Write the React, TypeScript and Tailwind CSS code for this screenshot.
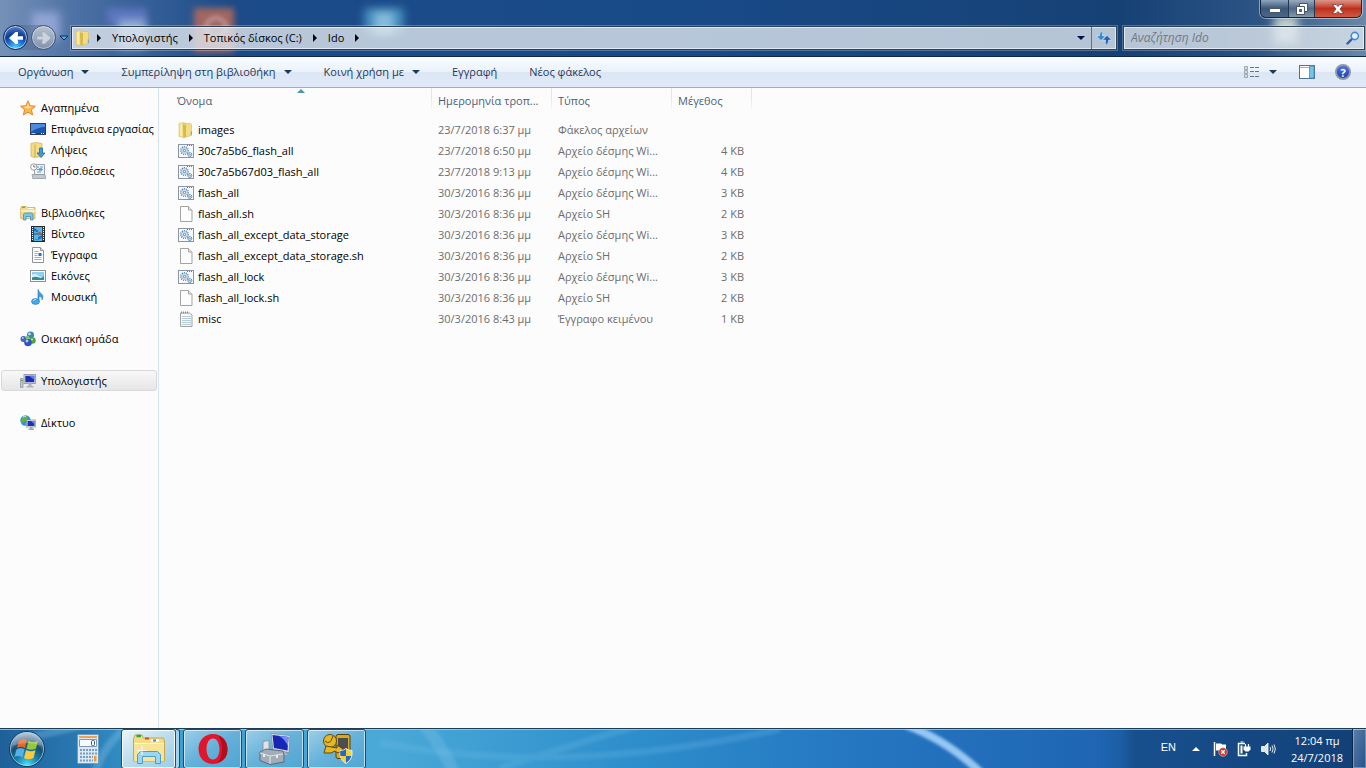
import React from 'react';

type IconProps = { className?: string };

const FolderIcon = () => (
  <svg viewBox="0 0 16 16" className="w-4 h-4 shrink-0" aria-hidden="true">
    <path d="M1 1.5L5.5 .5 8 1.5v13l-3 1-4-1z" fill="#f3e08a" stroke="#d9bd58" strokeWidth=".6" />
    <path d="M5 2l3-.5h4.5l1 1v11L6 15.5l-1-1z" fill="#f3dd82" stroke="#d6ba58" strokeWidth=".6" />
    <path d="M5 2.5L8 3v11.8l-2.5.7z" fill="#d6b84c" />
    <path d="M2.2 2l2.200-.4v13L2.200 14z" fill="#f9edac" />
    <path d="M12.8 9.5h.9V13h-.9z" fill="#4aa3e0" />
  </svg>
);

const BatchIcon = () => (
  <svg viewBox="0 0 16 16" className="w-4 h-4 shrink-0" aria-hidden="true">
    <rect x=".5" y="1.5" width="15" height="13" fill="#f6f8fb" stroke="#8b95a5" />
    <path d="M9 2.5h6" stroke="#5e7fa5" strokeDasharray="1 1" />
    <circle cx="6.5" cy="7.5" r="3.8" fill="none" stroke="#3f6f9f" strokeWidth="1.2" strokeDasharray="1 1.100" />
    <circle cx="6.5" cy="7.5" r="2.9" fill="#e6f1fa" stroke="#7fa8cc" strokeWidth=".7" />
    <circle cx="6.5" cy="7.5" r="1.2" fill="#fff" stroke="#3b6795" strokeWidth=".8" />
    <circle cx="11.8" cy="11.5" r="2" fill="#e5f0fa" stroke="#35679c" strokeWidth="1" strokeDasharray="1.1 .5" />
    <circle cx="11.8" cy="11.5" r=".7" fill="#fff" stroke="#35679c" strokeWidth=".5" />
  </svg>
);

const FileIcon = () => (
  <svg viewBox="0 0 16 16" className="w-4 h-4 shrink-0" aria-hidden="true">
    <path d="M2.5 .5h8L14 4v11.5H2.5z" fill="#fdfdfd" stroke="#a3a3a3" />
    <path d="M10.5 .5V4H14" fill="#ececec" stroke="#a3a3a3" />
  </svg>
);

const TextIcon = () => (
  <svg viewBox="0 0 16 16" className="w-4 h-4 shrink-0" aria-hidden="true">
    <path d="M2.5 2h9L14 4v11.5H2.5z" fill="#f7f9fa" stroke="#a3a3a3" />
    <path d="M3 1.5h8" stroke="#8d8d8d" strokeWidth="2" strokeDasharray="1 1" />
    <path d="M4 5.5h9M4 7.5h9M4 9.5h9M4 11.5h9M4 13.5h9" stroke="#b9cdd8" />
  </svg>
);

const StarIcon = () => (
  <svg viewBox="0 0 16 16" className="w-4 h-4 shrink-0" aria-hidden="true">
    <path d="M8 .8l2.1 4.9 5.3.5-4 3.5 1.2 5.2L8 12.2l-4.6 2.7 1.2-5.2-4-3.5 5.3-.5z" fill="#fcb64a" stroke="#e8842a" strokeLinejoin="round" />
    <path d="M8 3l1.3 3.5 3.5.5-5 1.5-4.3-1.6 3.2-.4z" fill="#fee3a4" />
  </svg>
);

const DesktopIcon = () => (
  <svg viewBox="0 0 16 16" className="w-4 h-4 shrink-0" aria-hidden="true">
    <rect x=".5" y="2.5" width="15" height="11" fill="#1d55b0" stroke="#2c3e5c" />
    <path d="M1 3h14v3Q8 6 1 11z" fill="#4b8be0" />
    <path d="M1 12.5h14" stroke="#27406b" />
    <path d="M1.5 12.5h4" stroke="#9fd0ee" />
    <path d="M11 12.5h3" stroke="#fff" strokeDasharray="1 1" />
  </svg>
);

const DownloadsIcon = () => (
  <svg viewBox="0 0 16 16" className="w-4 h-4 shrink-0" aria-hidden="true">
    <path d="M1 1.5l5-1 6 1v13l-7 1-4-1z" fill="#f2dd85" stroke="#cfae4c" strokeWidth=".7" />
    <path d="M5 2.5V15" stroke="#cda941" />
    <path d="M9.5 6h3v5H15l-4 4.5L7 11h2.5z" fill="#3f9be0" stroke="#1d67ae" strokeWidth=".8" />
  </svg>
);

const RecentIcon = () => (
  <svg viewBox="0 0 16 16" className="w-4 h-4 shrink-0" aria-hidden="true">
    <path d="M4.5 1.5h10v10h-10z" fill="#f1f3f6" stroke="#9aa1aa" />
    <path d="M7 4h2M10 4h3M7 6.5h6M7 9h4" stroke="#6b9ccc" />
    <path d="M9 5h3v3H9z" fill="#59b0e4" />
    <circle cx="3.8" cy="4" r="3.2" fill="#fff" stroke="#8b8f96" strokeWidth=".9" />
    <path d="M3.8 2v2h1.7" fill="none" stroke="#555" strokeWidth=".8" />
    <path d="M2 11.5h13l.8 4h-13z" fill="#c5c9cf" stroke="#8b9098" strokeWidth=".7" />
  </svg>
);

const LibrariesIcon = () => (
  <svg viewBox="0 0 16 16" className="w-4 h-4 shrink-0" aria-hidden="true">
    <path d="M.7 3.5l.8-2h5l1 1H15v11H.7z" fill="#f1dc88" stroke="#cfae56" strokeWidth=".8" />
    <path d="M2 2.3h3" stroke="#4ca64c" />
    <path d="M8 3.5h5" stroke="#fff" />
    <path d="M1 5h14v2H1z" fill="#fbf0b8" />
    <path d="M3.5 15V9L5 8h6.500L13 9v6h-2.5v-3.5H6V15z" fill="#7cc5ec" stroke="#3d8fc4" strokeWidth=".8" />
  </svg>
);

const VideoIcon = () => (
  <svg viewBox="0 0 16 16" className="w-4 h-4 shrink-0" aria-hidden="true">
    <rect x="1.5" y=".5" width="13" height="15" fill="#39434e" stroke="#222930" />
    <path d="M4 1h8v6.500H4zM4 8.500h8V15H4z" fill="#55b6ec" />
    <path d="M4 1.500l4 3v2L4 5zM12 9l-4 2v3l4-2z" fill="#1f75ba" />
    <path d="M8 6l3 1M5 13l3 1" stroke="#c4553b" />
    <path d="M2.500 1v14M13.500 1v14" stroke="#f1f1f1" strokeDasharray="1 1" />
  </svg>
);

const DocumentIcon = () => (
  <svg viewBox="0 0 16 16" className="w-4 h-4 shrink-0" aria-hidden="true">
    <path d="M2.5 .5h8l3 3v12h-11z" fill="#fdfdfd" stroke="#8f959c" />
    <path d="M10.5 .5v3h3" fill="#e4e7ea" stroke="#8f959c" />
    <path d="M4.5 4.5h4M4.5 6.5h3M4.5 8.5h3M4.5 10.5h7M4.5 12.5h7" stroke="#9fb0c2" />
    <path d="M8.500 6h3v3h-3z" fill="#2f6fb4" />
  </svg>
);

const PicturesIcon = () => (
  <svg viewBox="0 0 16 16" className="w-4 h-4 shrink-0" aria-hidden="true">
    <rect x=".5" y="2.5" width="15" height="11" fill="#fff" stroke="#8b9096" />
    <path d="M2 4h12v8H2z" fill="#8dd0f3" />
    <path d="M2 7q3-2 6 .5t6 .5v4H2z" fill="#d9f1fb" />
    <path d="M2 9.5q4-1.500 7 0t5-2V12H2z" fill="#2f8e94" />
  </svg>
);

const MusicIcon = () => (
  <svg viewBox="0 0 16 16" className="w-4 h-4 shrink-0" aria-hidden="true">
    <path d="M8 .5q1 3 3.500 4.500T12 11q1-3-3-4v5.500H8z" fill="#3b9fe0" stroke="#2377b8" strokeWidth=".6" />
    <ellipse cx="5.5" cy="12.5" rx="4" ry="2.9" fill="#44a9ea" stroke="#2377b8" strokeWidth=".6" />
    <path d="M3 12q1-1.800 3-1.600" stroke="#b6e2fa" fill="none" />
  </svg>
);

const HomegroupIcon = () => (
  <svg viewBox="0 0 16 16" className="w-4 h-4 shrink-0" aria-hidden="true">
    <circle cx="10.5" cy="4" r="3.6" fill="#3f86b8" />
    <circle cx="3.5" cy="8" r="3" fill="#3d68bd" />
    <circle cx="12.5" cy="9.5" r="3.2" fill="#4ba348" />
    <circle cx="8" cy="11.5" r="3.8" fill="#3552c0" />
    <circle cx="7.5" cy="6.5" r="1.8" fill="#79c36e" />
    <circle cx="9.5" cy="3" r="1.3" fill="#c3e3f4" />
    <circle cx="7" cy="10" r="1.4" fill="#b6c8f7" />
    <circle cx="12" cy="8.5" r="1" fill="#c5ecb6" />
    <circle cx="2.8" cy="7" r=".9" fill="#bdd1f5" />
  </svg>
);

const ComputerIcon = () => (
  <svg viewBox="0 0 16 16" className="w-4 h-4 shrink-0" aria-hidden="true">
    <path d="M.5 5.500H3v9H.5z" fill="#c3c8ce" stroke="#8a9098" strokeWidth=".7" />
    <path d="M1 7.500h1.500" stroke="#3faa3f" />
    <rect x="4" y="1.500" width="11.500" height="9" fill="#d7dade" stroke="#8d929a" strokeWidth=".8" />
    <path d="M5.300 2.800h9v6.400h-9z" fill="#1c2fb4" />
    <path d="M9 2.800h5.300v4z" fill="#5e7ff0" />
    <path d="M8.500 10.500h3V13h2v1.500h-7V13h2z" fill="#aeb3ba" />
  </svg>
);

const NetworkIcon = () => (
  <svg viewBox="0 0 16 16" className="w-4 h-4 shrink-0" aria-hidden="true">
    <circle cx="5.5" cy="5.5" r="5.2" fill="#3a8fd2" />
    <path d="M2 3q3-3 5-1.500T5 6 1 7zM6 7q3 0 2 3l-3-.5z" fill="#58b64a" />
    <path d="M3 2q2-1.200 3-.6" stroke="#d8f2fa" fill="none" />
    <rect x="6.5" y="5" width="9" height="7" fill="#dfe3e8" stroke="#8d929a" strokeWidth=".7" />
    <path d="M7.500 6h7v5h-7z" fill="#1a36b8" />
    <path d="M11 6h3.500v3z" fill="#6a8bf4" />
    <path d="M10 12h2.500v1.500H14V15H8.500v-1.500H10z" fill="#a4aab2" />
  </svg>
);

const Caret = ({ className = 'fill-[#1e395b]' }: IconProps) => (
  <svg viewBox="0 0 8 4" className={`h-1 w-2 shrink-0 ${className}`} aria-hidden="true">
    <path d="M0 0h8L4 4z" />
  </svg>
);

const CrumbArrow = () => (
  <svg viewBox="0 0 4 8" className="h-2 w-1 shrink-0" aria-hidden="true">
    <path d="M0 0l4 4-4 4z" fill="#000" />
  </svg>
);

const sidebarGroups = [
  {
    label: 'Αγαπημένα',
    icon: StarIcon,
    children: [
      { label: 'Επιφάνεια εργασίας', icon: DesktopIcon },
      { label: 'Λήψεις', icon: DownloadsIcon },
      { label: 'Πρόσ.θέσεις', icon: RecentIcon },
    ],
  },
  {
    label: 'Βιβλιοθήκες',
    icon: LibrariesIcon,
    children: [
      { label: 'Βίντεο', icon: VideoIcon },
      { label: 'Έγγραφα', icon: DocumentIcon },
      { label: 'Εικόνες', icon: PicturesIcon },
      { label: 'Μουσική', icon: MusicIcon },
    ],
  },
  { label: 'Οικιακή ομάδα', icon: HomegroupIcon, children: [] },
  { label: 'Υπολογιστής', icon: ComputerIcon, children: [], selected: true },
  { label: 'Δίκτυο', icon: NetworkIcon, children: [] },
];

const BATCH = 'Αρχείο δέσμης Wi...';

const files = [
  { name: 'images', date: '23/7/2018 6:37 μμ', type: 'Φάκελος αρχείων', size: '', icon: FolderIcon },
  { name: '30c7a5b6_flash_all', date: '23/7/2018 6:50 μμ', type: BATCH, size: '4 KB', icon: BatchIcon },
  { name: '30c7a5b67d03_flash_all', date: '23/7/2018 9:13 μμ', type: BATCH, size: '4 KB', icon: BatchIcon },
  { name: 'flash_all', date: '30/3/2016 8:36 μμ', type: BATCH, size: '3 KB', icon: BatchIcon },
  { name: 'flash_all.sh', date: '30/3/2016 8:36 μμ', type: 'Αρχείο SH', size: '2 KB', icon: FileIcon },
  { name: 'flash_all_except_data_storage', date: '30/3/2016 8:36 μμ', type: BATCH, size: '3 KB', icon: BatchIcon },
  { name: 'flash_all_except_data_storage.sh', date: '30/3/2016 8:36 μμ', type: 'Αρχείο SH', size: '2 KB', icon: FileIcon },
  { name: 'flash_all_lock', date: '30/3/2016 8:36 μμ', type: BATCH, size: '3 KB', icon: BatchIcon },
  { name: 'flash_all_lock.sh', date: '30/3/2016 8:36 μμ', type: 'Αρχείο SH', size: '2 KB', icon: FileIcon },
  { name: 'misc', date: '30/3/2016 8:43 μμ', type: 'Έγγραφο κειμένου', size: '1 KB', icon: TextIcon },
];

const commands = [
  { label: 'Οργάνωση', menu: true },
  { label: 'Συμπερίληψη στη βιβλιοθήκη', menu: true },
  { label: 'Κοινή χρήση με', menu: true },
  { label: 'Εγγραφή', menu: false },
  { label: 'Νέος φάκελος', menu: false },
];

function WindowButtons() {
  return (
    <div className="absolute right-1 top-0 flex h-[18px] overflow-hidden rounded-b-md border border-t-0 border-[#16273d] shadow-[0_0_0_1px_rgba(255,255,255,0.45)]">
      <button aria-label="Ελαχιστοποίηση" className="flex w-7 items-end justify-center border-r border-[#24374f] bg-linear-to-b from-[#8fa4bf] via-[#3c5878] to-[#47678c] pb-1">
        <svg viewBox="0 0 12 5" className="h-[5px] w-3">
          <rect x=".5" y=".5" width="11" height="4" rx=".5" fill="#fff" stroke="#4b5563" />
        </svg>
      </button>
      <button aria-label="Επαναφορά" className="flex w-[26px] items-center justify-center border-r border-[#24374f] bg-linear-to-b from-[#9aabc0] via-[#4e6a88] to-[#8599ab]">
        <svg viewBox="0 0 12 12" className="h-3 w-3">
          <path d="M3.5 .5h8v8h-8z" fill="#fff" stroke="#4b5563" />
          <path d="M.5 3.5h8v8h-8z" fill="#fff" stroke="#4b5563" />
          <path d="M3.5 6.5h2v2h-2z" fill="#64798f" stroke="#4b5563" />
        </svg>
      </button>
      <button aria-label="Κλείσιμο" className="flex w-[46px] items-center justify-center bg-linear-to-b from-[#dd9588] via-[#bd2f1c] to-[#cf5a41]">
        <svg viewBox="0 0 12 10" className="h-2.5 w-3">
          <path d="M.5 .5H4l2 2 2-2h3.500L8 5l3.500 4.500H8l-2-2-2 2H.5L4 5z" fill="#fff" stroke="#5a3434" strokeWidth=".7" />
        </svg>
      </button>
    </div>
  );
}

function TitleBar() {
  return (
    <header className="relative flex h-14 shrink-0 items-end overflow-hidden bg-[linear-gradient(90deg,#7591b8_0%,#4a6fa3_6%,#1c4b88_17%,#194a88_50%,#164175_82%,#2c5484_92%,#6a88a8_100%)]">
      {/* desktop shortcuts showing through the glass */}
      <div aria-hidden="true" className="absolute inset-0">
        <div className="absolute left-8 top-3 h-7 w-7 bg-[#b5c0ee]/60 blur-[5px]" />
        <div className="absolute left-[107px] top-2 h-4 w-10 bg-[#6f7ed4]/60 blur-[3px]" />
        <div className="absolute left-[118px] top-5 h-7 w-7 bg-[#bcd3f0]/70 blur-[4px]" />
        <div className="absolute left-[194px] top-2 h-11 w-10 bg-[#b0695c]/90 blur-[3px]" />
        <div className="absolute left-[204px] top-4 h-6 w-6 rounded-full border-4 border-[#c9a7a8]/70 blur-[2px]" />
        <div className="absolute left-[364px] top-2 h-6 w-10 bg-[#4d9cc8]/80 blur-[4px]" />
        <div className="absolute left-[374px] top-3 h-6 w-5 bg-[#b0dcf0]/60 blur-[4px]" />
        <div className="absolute right-[68px] top-4 h-7 w-6 bg-[#e6ecd9]/80 blur-[5px]" />
      </div>
      <WindowButtons />

      <div className="relative mb-[6px] flex w-full items-center pl-[3px]">
        <div className="flex items-center gap-[3px] rounded-full bg-[#4a6487]/40">
          <button aria-label="Πίσω" className="flex h-[25px] w-[25px] items-center justify-center rounded-full border border-[#142c55] bg-[radial-gradient(circle_at_50%_95%,#4fd3ff_0%,#1f7be0_30%,#0d3a97_55%,#7ba3df_100%)] shadow-[inset_0_0_0_1px_rgba(255,255,255,0.6)]">
            <svg viewBox="0 0 16 14" className="h-3.5 w-4">
              <path d="M7.5 1L1 7l6.5 6H10V9.5L9 8.700h6V5.300H9l1-.8V1z" fill="#fff" />
            </svg>
          </button>
          <button aria-label="Εμπρός" className="flex h-[25px] w-[25px] items-center justify-center rounded-full border border-[#41597c] bg-linear-to-b from-[#b9c3d3] to-[#8191aa] shadow-[inset_0_0_0_1px_rgba(255,255,255,0.4)]">
            <svg viewBox="0 0 16 14" className="h-3.5 w-4">
              <path d="M8.5 1L15 7l-6.5 6H6V9.5L7 8.700H1V5.300h6L6 4.500V1z" fill="#ccd3de" stroke="#95a2b5" strokeWidth=".5" />
            </svg>
          </button>
        </div>
        <button aria-label="Πρόσφατες σελίδες" className="flex w-[15px] items-center justify-center">
          <Caret className="fill-[#49b4ee] stroke-[#10294d] overflow-visible" />
        </button>

        <div className="flex h-6 min-w-0 flex-1 items-center border border-[#2c4057] bg-[#dfe6ee]/80 pl-[3px] shadow-[inset_0_0_0_1px_rgba(255,255,255,0.6),0_0_0_1px_rgba(255,255,255,0.25)]">
          <FolderIcon />
          <nav className="flex flex-1 items-center gap-[11px] pl-1.5">
            <CrumbArrow />
            <a href="#computer">Υπολογιστής</a>
            <CrumbArrow />
            <a href="#c">Τοπικός δίσκος (C:)</a>
            <CrumbArrow />
            <a href="#ido">Ido</a>
            <CrumbArrow />
          </nav>
          <button aria-label="Προηγούμενες θέσεις" className="flex h-full w-5 items-center justify-center">
            <Caret className="fill-[#000b4a]" />
          </button>
          <button aria-label="Ανανέωση" className="flex h-full w-[25px] items-center justify-center border-l border-[#5f7188]">
            <svg viewBox="0 0 16 14" className="h-3.5 w-4">
              <path d="M7 0Q3.500 .5 3.500 4.500V5H.5l4.500 4.500L9.500 5H6.500Q6 2.500 7 0z" fill="#2f8ad8" stroke="#fff" strokeWidth=".4" />
              <path d="M9 14Q12.500 13.500 12.500 9.500V9h3L11 4.500 6.500 9h3Q10 11.500 9 14z" fill="#2460ac" stroke="#fff" strokeWidth=".4" />
            </svg>
          </button>
        </div>

        <div className="ml-1.5 mr-px flex h-6 w-[242px] items-center border border-[#2c4057] bg-[#dfe6ee]/80 pl-[7px] pr-1 shadow-[inset_0_0_0_1px_rgba(255,255,255,0.6),0_0_0_1px_rgba(255,255,255,0.25)]">
          <input
            type="search"
            aria-label="Αναζήτηση"
            placeholder="Αναζήτηση Ido"
            className="min-w-0 flex-1 bg-transparent text-[12px] italic outline-none placeholder:text-[#74787e]"
          />
          <svg viewBox="0 0 14 14" className="h-3.5 w-3.5" aria-hidden="true">
            <path d="M1.5 12.5L6 8" stroke="#2a5fae" strokeWidth="2.4" strokeLinecap="round" />
            <circle cx="8.8" cy="5" r="3.6" fill="#e6f1fa" stroke="#3f8fd2" strokeWidth="1.6" />
          </svg>
        </div>
      </div>
    </header>
  );
}

function CommandBar() {
  return (
    <div className="flex h-8 shrink-0 items-center justify-between border-b border-t border-b-[#a0afc3] border-t-[#13294a] bg-[linear-gradient(#fafcff_0%,#eaf2fb_48%,#dce6f4_52%,#dfe9f7_100%)] pl-[18px] pr-[15px] text-[#1e395b]">
      <div className="flex items-center gap-8">
        {commands.map((command) => (
          <button key={command.label} className="flex items-center gap-2 whitespace-nowrap">
            {command.label}
            {command.menu && <Caret />}
          </button>
        ))}
      </div>
      <div className="flex items-center">
        <button aria-label="Αλλαγή προβολής">
          <svg viewBox="0 0 16 14" className="h-3.5 w-4">
            <path d="M.5 1.5h3v3h-3zM.5 5.5h3v3h-3zM.5 9.5h3v3h-3z" fill="#fff" stroke="#8995a6" strokeWidth=".8" />
            <path d="M1.5 3h1M1.5 11h1" stroke="#3978c0" />
            <path d="M1.5 7h1" stroke="#cf3b2b" />
            <path d="M6 2.5h4M11 2.5h4M6 6.5h4M11 6.5h4M6 11.5h4M11 11.5h4" stroke="#63748b" />
          </svg>
        </button>
        <button aria-label="Περισσότερες επιλογές" className="ml-[9px] py-2">
          <Caret />
        </button>
        <button aria-label="Παράθυρο προεπισκόπησης" className="ml-[22px]">
          <svg viewBox="0 0 16 14" className="h-3.5 w-4">
            <rect x=".5" y=".5" width="15" height="13" fill="#fff" stroke="#4f7296" />
            <path d="M1 2.5h9" stroke="#9ab2cc" />
            <path d="M10.5 1H15v12h-4.5z" fill="#76c4e8" stroke="#4f88b0" strokeWidth=".8" />
          </svg>
        </button>
        <button aria-label="Βοήθεια" className="ml-5 flex h-4 w-4 items-center justify-center rounded-full border-2 border-[#8e98ac] bg-[radial-gradient(circle_at_50%_20%,#4f78e6,#1b35a0)] leading-none font-bold text-white">
          ?
        </button>
      </div>
    </div>
  );
}

function Sidebar() {
  return (
    <nav className="flex w-[159px] shrink-0 flex-col gap-[21px] border-r border-[#d6e5f5] pt-[9px] pl-px pr-px">
      {sidebarGroups.map(({ label, icon: Icon, children, selected }) => (
        <ul key={label}>
          <li>
            <a
              href="#"
              className={`flex h-[21px] items-center gap-[5px] whitespace-nowrap rounded-[3px] border pl-[18px] ${
                selected ? 'border-[#d9d9d9] bg-linear-to-b from-[#f8f8f8] to-[#e6e6e6]' : 'border-transparent'
              }`}
            >
              <Icon />
              {label}
            </a>
          </li>
          {children.map(({ label: childLabel, icon: ChildIcon }) => (
            <li key={childLabel}>
              <a href="#" className="flex h-[21px] items-center gap-[5px] whitespace-nowrap pl-[29px]">
                <ChildIcon />
                {childLabel}
              </a>
            </li>
          ))}
        </ul>
      ))}
    </nav>
  );
}

const headCell = 'h-[31px] pb-1.5 text-left font-normal bg-[linear-gradient(#dbe7f5_40%,#fcfcfc)] bg-[length:1px_24px] bg-right-top bg-no-repeat';

function FileList() {
  return (
    <main className="relative min-w-0 flex-1 overflow-auto">
      <svg viewBox="0 0 8 4" className="absolute left-[138px] top-px h-1 w-2" aria-hidden="true">
        <path d="M0 4h8L4 0z" fill="#4d93b8" />
      </svg>
      <table className="w-[593px] table-fixed border-collapse">
        <colgroup>
          <col className="w-[273px]" />
          <col className="w-[120px]" />
          <col className="w-[120px]" />
          <col className="w-20" />
        </colgroup>
        <thead>
          <tr className="whitespace-nowrap text-[#4c607a]">
            <th className={`${headCell} pl-[18px]`}>Όνομα</th>
            <th className={`${headCell} pl-1.5`}>Ημερομηνία τροπ...</th>
            <th className={`${headCell} pl-1.5`}>Τύπος</th>
            <th className={`${headCell} pl-1.5`}>Μέγεθος</th>
          </tr>
        </thead>
        <tbody>
          {files.map(({ name, date, type, size, icon: Icon }) => (
            <tr key={name} className="h-[21px] whitespace-nowrap text-[#6d6d6d]">
              <td className="p-0 pl-[19px] text-black">
                <div className="flex items-center gap-1">
                  <Icon />
                  {name}
                </div>
              </td>
              <td className="p-0 pl-1.5">{date}</td>
              <td className="p-0 pl-1.5">{type}</td>
              <td className="p-0 pr-2 text-right">{size}</td>
            </tr>
          ))}
        </tbody>
      </table>
    </main>
  );
}

const taskButton =
  'flex h-10 w-[59px] items-center justify-center rounded-[3px] border border-[#1d4c70] bg-linear-to-br from-[#a6d3ea]/90 via-[#6db4da]/80 to-[#55a5d2]/80 shadow-[inset_0_0_0_1px_rgba(255,255,255,0.6)]';

function Taskbar() {
  return (
    <footer className="relative flex h-10 shrink-0 items-center overflow-hidden border-t border-[#1d3c55] bg-[linear-gradient(90deg,#1f6099_0%,#2a7ab4_6%,#3a9fd2_12%,#4ba9d8_28%,#2f90cc_45%,#2577c2_62%,#1f66b4_80%,#1c5ea6_82%,#17508e_83%,#123f76_100%)] text-white">
      <svg viewBox="0 0 1366 40" preserveAspectRatio="none" className="absolute inset-0 h-full w-full" aria-hidden="true">
        <defs>
          <filter id="soft">
            <feGaussianBlur stdDeviation="1.5" />
          </filter>
        </defs>
        <g filter="url(#soft)" fill="none">
          <path d="M906 -4Q948 12 982 46" stroke="#a3d0f8" strokeWidth="8" strokeOpacity=".9" />
          <path d="M380 14Q560 50 780 0M500 40Q560 20 640 -4" stroke="#6fbbe6" strokeOpacity=".25" strokeWidth="7" />
          <path d="M424 -4Q442 18 454 44" stroke="#8acdec" strokeOpacity=".25" strokeWidth="12" />
          <path d="M95 44Q105 14 130 -4M20 10Q60 2 90 -6" stroke="#8acdec" strokeOpacity=".3" strokeWidth="8" />
        </g>
        <path d="M0 .5h1366" stroke="#a9d0e8" strokeOpacity=".8" />
      </svg>

      <div className="relative flex items-center">
        <button aria-label="Έναρξη" className="ml-2 h-[38px] w-[38px]">
          <svg viewBox="0 0 38 38" className="h-full w-full">
            <defs>
              <radialGradient id="orb" cx=".5" cy=".95" r=".9">
                <stop offset="0" stopColor="#4fe0f5" />
                <stop offset=".35" stopColor="#1782ae" />
                <stop offset=".65" stopColor="#184c74" />
                <stop offset="1" stopColor="#9eb8cc" />
              </radialGradient>
            </defs>
            <circle cx="19" cy="19" r="17.5" fill="url(#orb)" stroke="#123a5c" />
            <circle cx="19" cy="19" r="16.5" fill="none" stroke="#b9dcec" strokeOpacity=".7" />
            <path d="M11 10.500Q15 7.500 19 10L17 18Q13 15.500 9 18z" fill="#e8672b" />
            <path d="M20.500 10.500Q25 13.500 30 10.500L28 18.500Q23 21 18.500 18.500z" fill="#93c83d" />
            <path d="M8.500 19.500Q13 17 16.500 19.500L14.500 27.500Q10.500 25 6.500 27z" fill="#58b0ea" />
            <path d="M18 20Q23 22.500 27.500 20L25.500 28Q20.500 30.500 16 28z" fill="#fbca3c" />
            <path d="M4 16Q6 4 19 3t15 13Q19 10 4 16z" fill="#fff" fillOpacity=".22" />
          </svg>
        </button>
        <button aria-label="Αριθμομηχανή" className="ml-[31px] w-[22px]">
          <svg viewBox="0 0 22 30" className="h-[30px] w-[22px]">
            <rect x=".5" y=".5" width="21" height="29" rx="1" fill="#dbe9f4" stroke="#6e9cc0" />
            <path d="M2 2h18v2H2z" fill="#f3a24a" />
            <path d="M2.500 5.500h17v7h-17z" fill="#f6fafd" stroke="#7f9ab5" />
            <rect x="14.5" y="6.5" width="3" height="5" rx="1" fill="none" stroke="#3d5a7b" />
            <path d="M3 16h17M3 19.500h17M3 23h13M3 26.500h13" stroke="#7d9dbd" strokeWidth="2" strokeDasharray="2 1" />
            <path d="M17 22h2.500v5.500H17z" fill="#ee9b3c" />
          </svg>
        </button>

        <div className="ml-[22px] flex gap-[3px]">
          <div className="flex">
            <button aria-label="Εξερεύνηση των Windows" className="flex h-10 w-[55px] items-center justify-center rounded-[3px] border border-[#1d4c70] bg-linear-to-br from-[#f4fafc]/95 via-[#c9e4f0]/90 to-[#a5d2e8]/90 shadow-[inset_0_0_0_1px_rgba(255,255,255,0.9)]">
              <svg viewBox="0 0 32 30" className="h-[30px] w-8">
                <path d="M.5 5L2 1h7l1.500 3h20l1 3v20H.5z" fill="#f3dc86" stroke="#c9a64b" />
                <path d="M3.500 2H8" stroke="#2fa63b" strokeWidth="2.5" />
                <path d="M12 4.500h4" stroke="#d5492f" strokeWidth="2" />
                <path d="M18 6.500h8" stroke="#fff" strokeWidth="2.5" />
                <path d="M20 6.500h3" stroke="#3a85d0" strokeWidth="2" />
                <path d="M1 9h30v18H1z" fill="#f6e498" />
                <path d="M1 9.500h30" stroke="#fdf6cf" />
                <path d="M4.500 29.500v-9l3-3h17l3 3v9h-5v-7h-13v7z" fill="#9bd6f2" stroke="#4d9dc8" />
                <path d="M9 12v9M4.500 16.500h9" stroke="#fff" />
              </svg>
            </button>
            <div className="h-10 w-1 rounded-r-[3px] border border-l-0 border-[#1d4c70] bg-[#a5d2e8]" />
          </div>
          <button aria-label="Opera" className={taskButton}>
            <svg viewBox="0 0 32 32" className="h-8 w-8">
              <path fillRule="evenodd" d="M16 1C7.500 1 1.500 7.500 1.500 16S7.500 31 16 31s14.500-6.500 14.500-15S24.500 1 16 1zm0 4.500c4 0 6.500 4.700 6.500 10.500S20 26.500 16 26.500 9.500 21.800 9.500 16 12 5.500 16 5.500z" fill="#e3152b" />
              <path d="M20 2q10 3 10.500 14T20 30q5-4 5-14T20 2z" fill="#b40d20" />
            </svg>
          </button>
          <button aria-label="Διαχείριση συσκευών" className={taskButton}>
            <svg viewBox="0 0 32 32" className="h-8 w-8">
              <path d="M12 .5l19 2-1 17-16-2.500z" fill="#d8dde2" stroke="#777f88" strokeWidth=".6" />
              <path d="M13.500 2l16 2-1 13.500L15 15z" fill="#1726b5" />
              <path d="M20 3l9.500 1-.7 9q-3-7-8.800-10z" fill="#6f8dff" />
              <path d="M18 19h8l3 3H18z" fill="#aeb5bd" />
              <path d="M4 8.500l6-1v10l-6 1z" fill="#dfe3e7" stroke="#848b94" strokeWidth=".8" />
              <path d="M1 19l6-3 17 2 1 3v8l-14 2.500L1 27.500z" fill="#a3adb7" stroke="#505b66" strokeWidth=".8" />
              <path d="M1 20l10 3 13-2M11 23v8" stroke="#dfe5eb" fill="none" />
              <path d="M5 21v3M18 22v3" stroke="#e9edf0" strokeWidth="2" />
            </svg>
          </button>
          <button aria-label="Εργαλείο flash" className={taskButton}>
            <svg viewBox="0 0 32 32" className="h-8 w-8">
              <rect x="15" y="1.5" width="14" height="24" rx="2" fill="#dca91d" stroke="#55400b" />
              <path d="M17 5h10v15H17z" fill="#4b4d50" />
              <circle cx="9" cy="8" r="6.5" fill="#e8b722" stroke="#604a0f" />
              <path d="M4 8q5 5 8-5M5 13l-2 7h7l4-2 3 2 5-4-6-4v3z" fill="#e8b722" stroke="#604a0f" />
              <path d="M19 17.500q4 0 6-2 2 2 6 2 1 9-6 13-7-4-6-13z" fill="#f7cf30" stroke="#eee" />
              <path d="M25 16v7h-5.500q-.5-2.500-.2-5 3.700-.2 5.700-2zM25 23h5.500q-1.500 4.500-5.500 7z" fill="#2469c2" />
            </svg>
          </button>
        </div>
      </div>

      <div className="relative ml-auto flex h-full items-center">
        <button className="font-['Liberation_Sans',sans-serif] pb-1">EN</button>
        <button aria-label="Εμφάνιση κρυφών εικονιδίων" className="ml-4">
          <svg viewBox="0 0 8 4" className="h-1 w-2">
            <path d="M0 4h8L4 0z" fill="#fff" />
          </svg>
        </button>
        <button aria-label="Κέντρο ενεργειών" className="ml-3">
          <svg viewBox="0 0 16 16" className="h-4 w-4">
            <path d="M2.500 1v14" stroke="#fff" strokeWidth="1.5" />
            <path d="M4 2.500h5l1 1h4v7H9l-1-1H4z" fill="#fff" />
            <circle cx="11" cy="11" r="4.3" fill="#d4342a" stroke="#f0c0bb" strokeWidth=".6" />
            <path d="M9.300 9.300l3.400 3.400M12.700 9.300l-3.400 3.400" stroke="#fff" strokeWidth="1.4" />
          </svg>
        </button>
        <button aria-label="Ενέργεια" className="ml-2">
          <svg viewBox="0 0 16 16" className="h-4 w-4">
            <path d="M9 2.500H2.500v12h8V12" fill="none" stroke="#fff" strokeWidth="1.5" />
            <path d="M4.500 1h3" stroke="#fff" />
            <path d="M4.500 4.500h2v8h-2z" fill="#fff" />
            <path d="M9.500 3v3M12.500 3v3" stroke="#fff" strokeWidth="1.2" />
            <path d="M7.500 5.500h7v3l-2 2h-3l-2-2z" fill="#fff" />
          </svg>
        </button>
        <button aria-label="Ένταση ήχου" className="ml-2">
          <svg viewBox="0 0 16 16" className="h-4 w-4">
            <path d="M1.500 5.500h3L8 2v12l-3.500-3.500h-3z" fill="#dfe5ec" stroke="#fff" strokeWidth=".8" />
            <path d="M10 6q1.300 2 0 4M12 4.500q2.300 3.500 0 7M14 3.500q2.800 4.500 0 9" fill="none" stroke="#fff" strokeWidth=".9" />
          </svg>
        </button>
        <button className="ml-3 w-[58px] whitespace-nowrap text-center leading-[17px]">
          12:04 πμ
          <br />
          24/7/2018
        </button>
        <button aria-label="Εμφάνιση επιφάνειας εργασίας" className="ml-1.5 h-full w-3.5 border-l border-[#0c2747] bg-linear-to-br from-[#8aa9cc]/60 to-[#3a6597]/50 shadow-[inset_0_0_0_1px_rgba(255,255,255,0.3)]" />
      </div>
    </footer>
  );
}

function App() {
  return (
    <div className="flex h-screen flex-col overflow-hidden bg-[#fcfcfc] font-['Open_Sans','Noto_Sans',sans-serif] text-[11px] leading-4 text-black">
      <TitleBar />
      <CommandBar />
      <div className="flex min-h-0 flex-1">
        <Sidebar />
        <FileList />
      </div>
      <Taskbar />
    </div>
  );
}

export default App;
